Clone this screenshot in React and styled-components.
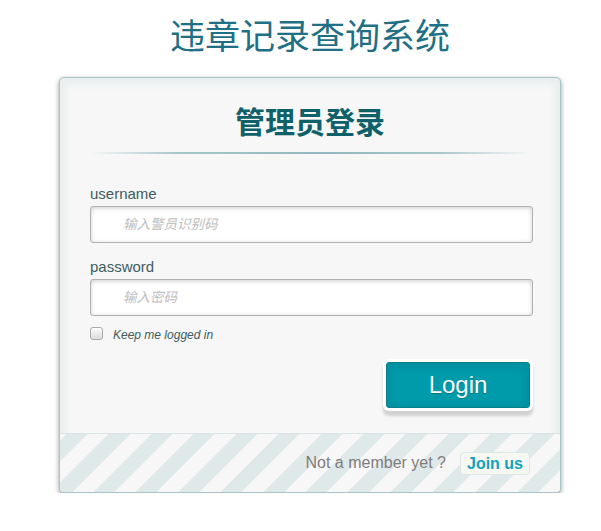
import React from "react";
import styled, { createGlobalStyle } from "styled-components";

const Global = createGlobalStyle`
  html, body { margin: 0; padding: 0; background: #ffffff; }
  body { font-family: "Liberation Sans", Arial, "Noto Sans CJK SC", sans-serif; }
  * { box-sizing: border-box; }
`;

const Wrapper = styled.div`
  width: 502px;
  margin-left: 59px;
  padding-top: 16px;
`;

const Title = styled.h1`
  margin: 0 0 26px;
  font-family: "Noto Sans CJK SC", sans-serif;
  font-size: 35px;
  line-height: 35px;
  font-weight: 400;
  color: #1f6f85;
  text-align: center;
`;

const Card = styled.div`
  background: #f7f7f7;
  border: 1px solid rgba(147, 184, 189, 0.8);
  border-radius: 5px;
  box-shadow: 0 2px 5px rgba(105, 108, 109, 0.7),
    inset 0 0 8px 5px rgba(208, 223, 226, 0.4);
  overflow: hidden;
`;

const Body = styled.form`
  padding: 27px 30px 25px;
  display: flex;
  flex-direction: column;
`;

const Heading = styled.h2`
  margin: 0;
  font-family: "Noto Sans CJK SC", sans-serif;
  font-size: 30px;
  line-height: 31px;
  font-weight: 700;
  color: #0e6069;
  text-align: center;
`;

const Divider = styled.div`
  margin-top: 16px;
  height: 2px;
  background: linear-gradient(
    to right,
    rgba(147, 184, 189, 0) 0%,
    rgba(147, 184, 189, 0.8) 20%,
    rgba(147, 184, 189, 1) 53%,
    rgba(147, 184, 189, 0.8) 79%,
    rgba(147, 184, 189, 0) 100%
  );
`;

const Field = styled.div`
  margin-top: ${(p) => p.$gap}px;
  display: flex;
  flex-direction: column;
`;

const Label = styled.label`
  font-size: 15px;
  line-height: 17px;
  color: #405c60;
`;

const Input = styled.input`
  margin-top: 4px;
  width: 443px;
  height: 37px;
  padding: 0 5px 0 32px;
  border: 1px solid #b2b2b2;
  border-radius: 3px;
  background: #ffffff;
  box-shadow: inset 0 1px 4px 0 rgba(168, 168, 168, 0.6);
  font-family: "Liberation Sans", Arial, "Noto Sans CJK SC", sans-serif;
  font-size: 13.5px;
  outline: none;
  &::placeholder {
    color: #bdbdbd;
    font-style: italic;
  }
`;

const KeepRow = styled.div`
  margin-top: 11px;
  display: flex;
  align-items: center;
  height: 13px;
`;

const Check = styled.input`
  appearance: none;
  -webkit-appearance: none;
  margin: 0;
  width: 13px;
  height: 13px;
  border: 1px solid #a9a9a9;
  border-radius: 3px;
  background: linear-gradient(to bottom, #fcfcfc, #dcdcdc);
  box-shadow: inset 0 1px 1px rgba(255, 255, 255, 0.8);
  &:checked {
    background: #2a8dd4;
  }
`;

const KeepLabel = styled.label`
  margin-left: 10px;
  padding-top: 3px;
  font-size: 12px;
  font-style: italic;
  color: #405c60;
`;

const ButtonRow = styled.div`
  margin-top: 22px;
  display: flex;
  justify-content: flex-end;
`;

const LoginButton = styled.button`
  width: 144px;
  height: 46px;
  background: #009bab;
  border: 1px solid #0a7f8b;
  border-radius: 3px;
  color: #ffffff;
  font-family: "Liberation Sans", Arial, sans-serif;
  font-size: 24px;
  text-shadow: 0 1px 1px rgba(0, 0, 0, 0.25);
  box-shadow: inset 0 1px 6px 4px rgba(0, 0, 0, 0.07), 0 0 0 3px #fefefe,
    0 5px 3px 3px #d2d2d2;
  cursor: pointer;
`;

const Footer = styled.div`
  height: 59px;
  border-top: 1px solid #dbe5e8;
  padding: 0 30px;
  display: flex;
  align-items: center;
  justify-content: flex-end;
  font-size: 16px;
  color: #7f7c7c;
  background: repeating-linear-gradient(
    -45deg,
    #f7f7f7 0px,
    #f7f7f7 15px,
    #dfe9ea 15px,
    #dfe9ea 30px
  );
`;

const JoinLink = styled.a`
  margin-left: 14px;
  padding: 2px 6px;
  line-height: 17px;
  background: #f7f8f1;
  border: 1px solid #dbe8e5;
  border-radius: 4px;
  font-weight: 700;
  color: #13a2bd;
  text-decoration: none;
`;

export default function App() {
  return (
    <>
      <Global />
      <Wrapper>
        <Title>违章记录查询系统</Title>
        <Card>
          <Body onSubmit={(e) => e.preventDefault()}>
            <Heading>管理员登录</Heading>
            <Divider />
            <Field $gap={31}>
              <Label htmlFor="username">username</Label>
              <Input id="username" type="text" placeholder="输入警员识别码" />
            </Field>
            <Field $gap={15}>
              <Label htmlFor="password">password</Label>
              <Input id="password" type="password" placeholder="输入密码" />
            </Field>
            <KeepRow>
              <Check id="keep" type="checkbox" />
              <KeepLabel htmlFor="keep">Keep me logged in</KeepLabel>
            </KeepRow>
            <ButtonRow>
              <LoginButton type="submit">Login</LoginButton>
            </ButtonRow>
          </Body>
          <Footer>
            Not a member yet ?<JoinLink href="#">Join us</JoinLink>
          </Footer>
        </Card>
      </Wrapper>
    </>
  );
}
